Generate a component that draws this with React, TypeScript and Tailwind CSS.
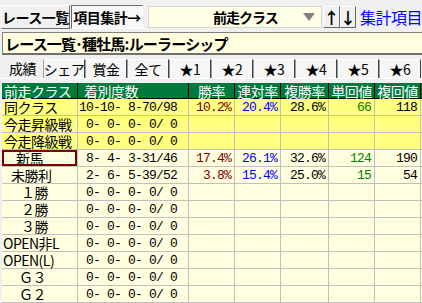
const jp = { fontFamily: '"Noto Sans CJK JP", sans-serif' };
const mono = { fontFamily: '"Liberation Mono", monospace' };

type Row = {
  label: string;
  indent: string;
  nums: string;
  win?: string;
  ren?: string;
  fuku?: string;
  tan?: string;
  fkv?: string;
  hot?: boolean;
  sel?: boolean;
};

const rows: Row[] = [
  { label: "同クラス", indent: "pl-[2px]", nums: "10-10- 8-70/98", win: "10.2%", ren: "20.4%", fuku: "28.6%", tan: "66", fkv: "118", hot: true },
  { label: "今走昇級戦", indent: "pl-[2px]", nums: " 0- 0- 0- 0/ 0", hot: true },
  { label: "今走降級戦", indent: "pl-[2px]", nums: " 0- 0- 0- 0/ 0", hot: true },
  { label: "新馬", indent: "pl-[14px]", nums: " 8- 4- 3-31/46", win: "17.4%", ren: "26.1%", fuku: "32.6%", tan: "124", fkv: "190", sel: true },
  { label: "未勝利", indent: "pl-[9px]", nums: " 2- 6- 5-39/52", win: "3.8%", ren: "15.4%", fuku: "25.0%", tan: "15", fkv: "54" },
  { label: "１勝", indent: "pl-[19px]", nums: " 0- 0- 0- 0/ 0" },
  { label: "２勝", indent: "pl-[19px]", nums: " 0- 0- 0- 0/ 0" },
  { label: "３勝", indent: "pl-[19px]", nums: " 0- 0- 0- 0/ 0" },
  { label: "OPEN非L", indent: "pl-[1px]", nums: " 0- 0- 0- 0/ 0" },
  { label: "OPEN(L)", indent: "pl-[1px]", nums: " 0- 0- 0- 0/ 0" },
  { label: "Ｇ３", indent: "pl-[17px]", nums: " 0- 0- 0- 0/ 0" },
  { label: "Ｇ２", indent: "pl-[17px]", nums: " 0- 0- 0- 0/ 0" },
];

const tabs = ["成績", "シェア", "賞金", "全て", "★1", "★2", "★3", "★4", "★5", "★6"];
const heads = ["前走クラス", "着別度数", "勝率", "連対率", "複勝率", "単回値", "複回値"];
const cols = "grid grid-cols-[76px_111px_46px_46px_48px_46px_46px]";
const raised = "border border-t-white border-l-white border-r-[#696969] border-b-[#696969]";

function Num({ v, color }: { v?: string; color: string }) {
  return (
    <div
      className={`flex items-center justify-end border-r border-[#c0c0c0] pr-[3px] text-[13px] leading-none tracking-[-0.8px] whitespace-pre ${color}`}
      style={mono}
    >
      {v ?? ""}
    </div>
  );
}

export default function App() {
  return (
    <div className="w-[422px] h-[303px] overflow-hidden bg-[#f0f0f0] text-black" style={jp}>
      {/* toolbar */}
      <div className="flex items-center h-[24px] mt-[5px] pl-[1px] whitespace-nowrap">
        <div className={`h-[24px] w-[74px] flex items-center justify-center bg-[#f0f0f0] text-[14px] leading-none font-bold tracking-[-0.5px] ${raised}`}>
          レース一覧
        </div>
        <div className="h-[24px] w-[78px] ml-[1px] flex items-center justify-center border border-t-[#696969] border-l-[#696969] border-r-white border-b-white bg-[#f8f8f8] text-[14px] leading-none font-bold tracking-[-0.5px]">
          項目集計→
        </div>
        <div className="h-[22px] w-[188px] ml-[5px] flex items-center bg-[#ffffe8] border border-[#d8d8c8]">
          <span className="flex-1 pl-[64px] text-[14px] leading-none font-bold tracking-[-1px]">前走クラス</span>
          <svg width="12" height="10" viewBox="0 0 12 10" className="mr-[6px]">
            <polygon points="0,1 12,1 6,9" fill="#808080" />
          </svg>
        </div>
        <div className={`h-[22px] w-[17px] ml-[1px] flex items-center justify-center text-[16px] leading-none font-bold ${raised}`}>
          ↑
        </div>
        <div className={`h-[22px] w-[16px] flex items-center justify-center text-[16px] leading-none font-bold ${raised}`}>
          ↓
        </div>
        <span className="ml-[4px] text-[16px] leading-none text-[#0000ff] tracking-[-0.5px]">集計項目</span>
      </div>

      {/* title */}
      <div className="mt-[3px] ml-[2px] h-[23px] flex items-center bg-[#ffffe0] border border-[#808080] border-r-0 border-b-2 border-b-[#707070] pl-[2px] text-[15px] leading-none font-bold tracking-[-0.8px] whitespace-nowrap">
        レース一覧･種牡馬:ルーラーシップ
      </div>

      {/* tabs */}
      <div className="flex items-end mt-[3px] h-[21px] ml-[2px] border-b border-white whitespace-nowrap">
        {tabs.map((t, i) => (
          <div
            key={t}
            className={
              i === 0
                ? "w-[41px] h-[21px] flex items-center justify-center text-[14px] leading-none tracking-[-0.5px]"
                : "w-[42px] h-[19px] flex items-center justify-center border-l border-t border-r border-l-[#a0a0a0] border-t-white border-r-[#404040] bg-[#f6f6f6] text-[14px] leading-none tracking-[-0.5px]"
            }
          >
            {t}
          </div>
        ))}
      </div>

      {/* table */}
      <div className="mt-[4px] ml-[2px]">
        <div className={`${cols} h-[16px] bg-[#007a3d] text-white border-b border-black`}>
          {heads.map((h, i) => (
            <div
              key={h}
              className={`flex items-center border-r border-black text-[14px] leading-none tracking-[-0.5px] whitespace-nowrap ${i === 0 ? "pl-[2px]" : i === 1 ? "pl-[6px]" : "justify-center"}`}
            >
              {h}
            </div>
          ))}
        </div>
        {rows.map((r) => (
          <div
            key={r.label}
            className={`${cols} h-[17px] border-b border-[#c0c0c0] ${r.hot ? "bg-[#ffff80]" : "bg-[#ffffe0]"}`}
          >
            <div
              className={`flex items-center border-r border-[#c0c0c0] text-[14px] leading-none whitespace-nowrap tracking-[-0.5px] ${r.indent} ${r.sel ? "ring-2 ring-inset ring-[#800000]" : ""}`}
            >
              {r.label}
            </div>
            <div
              className="flex items-center border-r border-[#c0c0c0] pl-[1px] text-[13px] leading-none whitespace-pre tracking-[-0.8px]"
              style={mono}
            >
              {r.nums}
            </div>
            <Num v={r.win} color="text-[#800000]" />
            <Num v={r.ren} color="text-[#0000ff]" />
            <Num v={r.fuku} color="text-black" />
            <Num v={r.tan} color="text-[#008000]" />
            <Num v={r.fkv} color="text-black" />
          </div>
        ))}
      </div>
    </div>
  );
}
